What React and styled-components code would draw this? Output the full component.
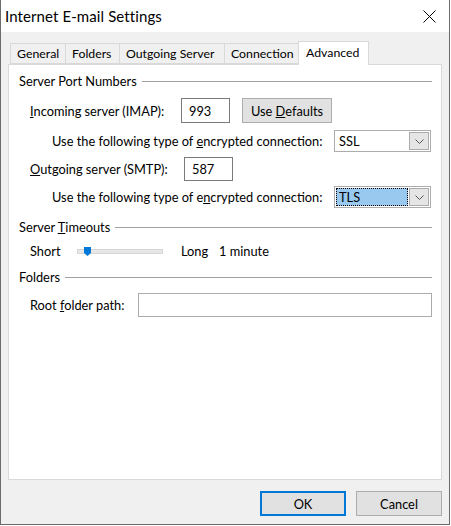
import React from 'react';
import styled, { createGlobalStyle } from 'styled-components';

const GlobalStyle = createGlobalStyle`
  body {
    margin: 0;
    background: #ffffff;
    font-family: Lato, "Liberation Sans", sans-serif;
    font-size: 12.8px;
    color: #000;
  }
`;

const Window = styled.div`
  width: 450px;
  height: 525px;
  box-sizing: border-box;
  border: 1px solid #6b6b6b;
  border-top: none;
  background: #f0f0f0;
  display: flex;
  flex-direction: column;
`;

const TitleBar = styled.div`
  height: 32px;
  background: #fff;
  display: flex;
  align-items: center;
  justify-content: space-between;
  padding: 0 13px 0 4px;
`;

const TitleText = styled.span`
  font-size: 15px;
  letter-spacing: 0.1px;
`;

const Body = styled.div`
  flex: 1;
  display: flex;
  flex-direction: column;
  padding: 8px 7px 0 7px;
`;

const TabStrip = styled.div`
  display: flex;
  align-items: flex-end;
  height: 24px;
  padding-left: 2px;
`;

const Tab = styled.div`
  box-sizing: border-box;
  width: ${p => p.$w}px;
  height: ${p => (p.$active ? 24 : 21)}px;
  margin-left: -1px;
  border: 1px solid #d9d9d9;
  border-bottom: ${p => (p.$active ? 'none' : '1px solid #d9d9d9')};
  background: ${p => (p.$active ? '#fff' : '#f0f0f0')};
  padding: ${p => (p.$active ? '2px 0 0 7px' : '1px 0 0 6px')};
  font-size: 12.3px;
  line-height: 17px;
  white-space: nowrap;
  position: relative;
  z-index: ${p => (p.$active ? 2 : 1)};
  margin-bottom: ${p => (p.$active ? '-1px' : '0')};
  &:first-child { margin-left: 0; }
`;

const Panel = styled.div`
  box-sizing: border-box;
  height: 416px;
  border: 1px solid #d9d9d9;
  background: #fff;
  padding: 8px 9px 0 10px;
  display: flex;
  flex-direction: column;
`;

const GroupHeader = styled.div`
  display: flex;
  align-items: center;
  height: 16px;
  margin-top: ${p => p.$mt || 0}px;
  gap: 5px;
  &::after {
    content: '';
    flex: 1;
    border-top: 1px solid #a0a0a0;
  }
`;

const Row = styled.div`
  display: flex;
  align-items: center;
  height: ${p => p.$h}px;
  margin-top: ${p => p.$mt}px;
  padding-left: ${p => p.$indent}px;
`;

const Label = styled.span`
  width: ${p => p.$w}px;
  flex-shrink: 0;
  white-space: nowrap;
`;

const TextBox = styled.div`
  box-sizing: border-box;
  width: ${p => (p.$w ? `${p.$w}px` : 'auto')};
  flex: ${p => (p.$w ? '0 0 auto' : '1')};
  height: ${p => p.$h}px;
  border: 1px solid ${p => p.$border || '#7a7a7a'};
  background: #fff;
  padding-left: 7px;
  display: flex;
  align-items: center;
`;

const Button = styled.div`
  box-sizing: border-box;
  width: ${p => p.$w}px;
  height: ${p => p.$h}px;
  margin-left: ${p => p.$ml || 0}px;
  background: #e1e1e1;
  border: ${p => (p.$default ? '2px solid #0078d7' : '1px solid #adadad')};
  display: flex;
  align-items: center;
  justify-content: center;
`;

const Select = styled.div`
  box-sizing: border-box;
  width: 97px;
  height: 22px;
  border: 1px solid #acacac;
  background: #fff;
  display: flex;
  padding: 1px;
  gap: 1px;
`;

const SelectValue = styled.div`
  flex: 1;
  display: flex;
  align-items: center;
  padding-left: 3px;
  background: ${p => (p.$selected ? '#99c9ef' : 'transparent')};
  outline: ${p => (p.$selected ? '1px dotted #000' : 'none')};
  outline-offset: -1px;
`;

const SelectArrow = styled.div`
  box-sizing: border-box;
  width: 20px;
  background: #e5e5e5;
  border: 1px solid #acacac;
  display: flex;
  align-items: center;
  justify-content: center;
`;

const SliderTrack = styled.div`
  box-sizing: border-box;
  width: 86px;
  height: 5px;
  margin-right: 18px;
  background: #e7e7e7;
  border: 1px solid #d6d6d6;
  position: relative;
`;

const Thumb = styled.svg`
  position: absolute;
  left: 6px;
  top: -3px;
`;

const Footer = styled.div`
  display: flex;
  justify-content: flex-end;
  gap: 10px;
  margin-top: 11px;
`;

const Chevron = () => (
  <svg width="9" height="5" viewBox="0 0 9 5">
    <path d="M0.5 0.5 L4.5 4.5 L8.5 0.5" fill="none" stroke="#555" strokeWidth="1" />
  </svg>
);

const EncryptionSelect = ({ value, selected }) => (
  <Select>
    <SelectValue $selected={selected}>{value}</SelectValue>
    <SelectArrow><Chevron /></SelectArrow>
  </Select>
);

export default function App() {
  const tabs = [
    { name: 'General', w: 56 },
    { name: 'Folders', w: 55 },
    { name: 'Outgoing Server', w: 106 },
    { name: 'Connection', w: 75 },
    { name: 'Advanced', w: 71, active: true },
  ];

  return (
    <>
      <GlobalStyle />
      <Window>
        <TitleBar>
          <TitleText>Internet E-mail Settings</TitleText>
          <svg width="13" height="13" viewBox="0 0 13 13">
            <path d="M0.5 0.5 L12.5 12.5 M12.5 0.5 L0.5 12.5" stroke="#000" strokeWidth="1" />
          </svg>
        </TitleBar>
        <Body>
          <TabStrip>
            {tabs.map(t => (
              <Tab key={t.name} $w={t.w} $active={t.active}>{t.name}</Tab>
            ))}
          </TabStrip>
          <Panel>
            <GroupHeader><span>Server Port Numbers</span></GroupHeader>

            <Row $h={25} $mt={9} $indent={11}>
              <Label $w={151}><u>I</u>ncoming server (IMAP):</Label>
              <TextBox $w={49} $h={25}>993</TextBox>
              <Button $w={90} $h={25} $ml={12}><span>Use <u>D</u>efaults</span></Button>
            </Row>

            <Row $h={22} $mt={7} $indent={33}>
              <Label $w={282}>Use the following type of <u>e</u>ncrypted connection:</Label>
              <EncryptionSelect value="SSL" />
            </Row>

            <Row $h={24} $mt={5} $indent={11}>
              <Label $w={154}><u>O</u>utgoing server (SMTP):</Label>
              <TextBox $w={49} $h={24}>587</TextBox>
            </Row>

            <Row $h={22} $mt={5} $indent={33}>
              <Label $w={282}>Use the following type of e<u>n</u>crypted connection:</Label>
              <EncryptionSelect value="TLS" selected />
            </Row>

            <GroupHeader $mt={11}><span>Server <u>T</u>imeouts</span></GroupHeader>

            <Row $h={16} $mt={8} $indent={11}>
              <Label $w={47}>Short</Label>
              <SliderTrack>
                <Thumb width="7" height="9" viewBox="0 0 7 9">
                  <path d="M0 0 H7 V6 L3.5 9 L0 6 Z" fill="#0078d7" />
                </Thumb>
              </SliderTrack>
              <Label $w={38}>Long</Label>
              <span>1 minute</span>
            </Row>

            <GroupHeader $mt={10}><span>Folders</span></GroupHeader>

            <Row $h={24} $mt={8} $indent={11}>
              <Label $w={108}>Root <u>f</u>older path:</Label>
              <TextBox $h={24} $border="#acacac" />
            </Row>
          </Panel>
          <Footer>
            <Button $w={86} $h={25} $default>OK</Button>
            <Button $w={86} $h={25}>Cancel</Button>
          </Footer>
        </Body>
      </Window>
    </>
  );
}
